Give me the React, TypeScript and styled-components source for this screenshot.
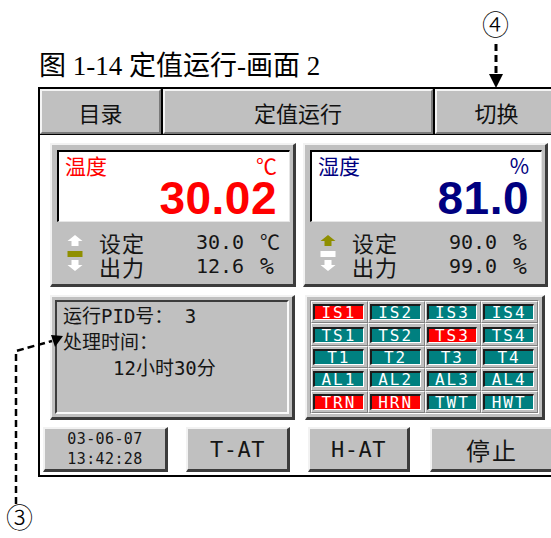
import React from "react";
import styled, { createGlobalStyle } from "styled-components";

const GlobalStyle = createGlobalStyle`
  html, body {
    margin: 0;
    padding: 0;
    background: #fff;
    overflow: hidden;
  }
`;

const MONO = `"DejaVu Sans Mono", "Noto Sans CJK SC", monospace`;
const CJK = `"Noto Sans CJK SC", "DejaVu Sans", sans-serif`;

const Page = styled.div`
  position: relative;
  width: 551px;
  height: 538px;
  overflow: hidden;
  padding-top: 51px;
  box-sizing: border-box;
`;

const Caption = styled.div`
  margin-left: 39px;
  height: 36px;
  font-family: "Liberation Serif", "Noto Sans CJK SC", serif;
  font-size: 27px;
  line-height: 31px;
  color: #000;
  white-space: nowrap;
`;

const Screen = styled.div`
  margin-left: 38px;
  width: 522px;
  height: 390px;
  box-sizing: border-box;
  border: 2px solid #000;
  background: #fff;
  display: flex;
  flex-direction: column;
`;

const Header = styled.div`
  height: 46px;
  display: flex;
  gap: 2px;
  background: #000;
  border-bottom: 1px solid #000;
  box-sizing: border-box;
`;

const HeadButton = styled.div<{ $w?: number }>`
  ${({ $w }) => ($w ? `width: ${$w}px;` : "flex: 1;")}
  box-sizing: border-box;
  background: #c0c0c0;
  border-top: 2px solid #f4f4f4;
  border-left: 2px solid #f4f4f4;
  border-right: 2px solid #7a7a7a;
  border-bottom: 2px solid #7a7a7a;
  display: flex;
  align-items: center;
  justify-content: center;
  font-family: ${CJK};
  font-size: 22px;
  color: #111;
`;

const Body = styled.div`
  flex: 1;
  padding: 8px 0 0 3px;
  display: flex;
  flex-direction: column;
`;

const Row = styled.div<{ $h: number; $gap: number; $mt?: number }>`
  display: flex;
  height: ${({ $h }) => $h}px;
  gap: ${({ $gap }) => $gap}px;
  margin-left: 7px;
  margin-top: ${({ $mt }) => $mt ?? 0}px;
`;

const Raised = styled.div<{ $w: number }>`
  width: ${({ $w }) => $w}px;
  box-sizing: border-box;
  background: #c0c0c0;
  border-top: 2px solid #f2f2f2;
  border-left: 2px solid #f2f2f2;
  border-right: 3px solid #3c3c3c;
  border-bottom: 3px solid #3c3c3c;
`;

const Card = styled(Raised)`
  padding: 5px 3px 0 5px;
  display: flex;
  flex-direction: column;
`;

const Display = styled.div<{ $color: string }>`
  height: 72px;
  box-sizing: border-box;
  background: #fff;
  border-top: 2px solid #000;
  border-left: 2px solid #000;
  border-right: 1px solid #e6e6e6;
  border-bottom: 1px solid #e6e6e6;
  padding: 1px 12px 0 6px;
  color: ${({ $color }) => $color};
  display: flex;
  flex-direction: column;
`;

const DisplayTop = styled.div`
  display: flex;
  justify-content: space-between;
  height: 26px;
  font-family: ${CJK};
  font-size: 21px;
  line-height: 24px;
`;

const BigValue = styled.div`
  text-align: right;
  margin-top: -3px;
  font-family: "Liberation Sans", Arial, sans-serif;
  font-weight: 700;
  font-size: 46px;
  line-height: 44px;
  letter-spacing: 0.5px;
`;

const SetArea = styled.div`
  flex: 1;
  display: flex;
  align-items: flex-start;
  padding: 8px 0 0 10px;
`;

const IconSlot = styled.div`
  width: 16px;
  margin-top: 5px;
  margin-right: 16px;
  display: flex;
`;

const Lines = styled.div`
  display: flex;
  flex-direction: column;
`;

const Line = styled.div`
  display: flex;
  align-items: center;
  height: 24px;
  color: #151515;
`;

const LineLabel = styled.span`
  width: 97px;
  font-family: ${CJK};
  font-size: 22px;
  line-height: 24px;
  letter-spacing: 1px;
`;

const LineValue = styled.span`
  width: 64px;
  font-family: ${MONO};
  font-size: 20px;
  line-height: 24px;
`;

const LineUnit = styled.span<{ $cjk?: boolean }>`
  font-family: ${({ $cjk }) => ($cjk ? CJK : MONO)};
  font-size: ${({ $cjk }) => ($cjk ? 20 : 23)}px;
  line-height: 24px;
`;

const PidBox = styled(Raised)`
  padding: 3px;
  display: flex;
`;

const Sunken = styled.div`
  flex: 1;
  border-top: 2px solid #3c3c3c;
  border-left: 2px solid #3c3c3c;
  border-right: 2px solid #fafafa;
  border-bottom: 2px solid #fafafa;
  padding: 1px 0 0 6px;
  font-family: ${MONO};
  font-size: 19px;
  line-height: 26px;
  color: #151515;
`;

const PidLine = styled.div<{ $indent?: number }>`
  padding-left: ${({ $indent }) => $indent ?? 0}px;
  white-space: nowrap;
`;

const GridBox = styled(Raised)`
  padding: 3px;
  display: flex;
`;

const Table = styled.div`
  flex: 1;
  display: grid;
  grid-template-columns: repeat(4, 1fr);
  grid-template-rows: repeat(5, 1fr);
  border-top: 1px solid #808080;
  border-left: 1px solid #808080;
  border-right: 1px solid #fff;
  border-bottom: 1px solid #fff;
`;

const Cell = styled.div`
  border-top: 1px solid #fafafa;
  border-left: 1px solid #fafafa;
  border-right: 1px solid #808080;
  border-bottom: 1px solid #808080;
  padding: 0 3px 0 1px;
  display: flex;
  align-items: center;
`;

const Flag = styled.div<{ $on: boolean }>`
  flex: 1;
  height: 16px;
  box-sizing: border-box;
  background: ${({ $on }) => ($on ? "#ff0000" : "#008080")};
  border-top: 2px solid #1c1c1c;
  border-left: 2px solid #1c1c1c;
  border-right: 1px solid #fff;
  border-bottom: 1px solid #fff;
  color: #fff;
  font-family: ${MONO};
  font-size: 16px;
  line-height: 13px;
  letter-spacing: 2px;
  text-align: center;
`;

const FootButton = styled(Raised)`
  display: flex;
  flex-direction: column;
  align-items: center;
  justify-content: center;
  color: #151515;
`;

const Footer = styled.div`
  display: flex;
  height: 45px;
  margin-top: 7px;
  gap: 18px;
`;

const Clock = styled.div`
  font-family: ${MONO};
  font-size: 15px;
  line-height: 20px;
  letter-spacing: 0.4px;
`;

const KeyText = styled.div<{ $cjk?: boolean }>`
  font-family: ${({ $cjk }) => ($cjk ? CJK : MONO)};
  font-size: ${({ $cjk }) => ($cjk ? 24 : 22)}px;
  letter-spacing: ${({ $cjk }) => ($cjk ? 2 : 0.5)}px;
`;

const Overlay = styled.svg`
  position: absolute;
  left: 0;
  top: 0;
  pointer-events: none;
`;

const Marker = styled.span<{ $x: number; $y: number }>`
  position: absolute;
  left: ${({ $x }) => $x}px;
  top: ${({ $y }) => $y}px;
  font-family: "Noto Sans CJK SC", "DejaVu Sans", sans-serif;
  font-weight: 300;
  font-size: 27px;
  line-height: 27px;
  color: #000;
`;

const Indicator: React.FC<{ up: string; mid: string }> = ({ up, mid }) => (
  <svg width="16" height="36" viewBox="0 0 16 36">
    <path d="M8 0 L15.5 6 H11.5 V11 H4.5 V6 H0.5 Z" fill={up} />
    <rect x="0.5" y="16" width="15" height="6" fill={mid} />
    <path d="M4.5 25 H11.5 V30 H15.5 L8 36 L0.5 30 H4.5 Z" fill="#fff" />
  </svg>
);

type Reading = {
  name: string;
  unit: string;
  value: string;
  color: string;
  up: string;
  mid: string;
  set: string;
  out: string;
  setUnit: string;
  width: number;
};

const readings: Reading[] = [
  { name: "温度", unit: "℃", value: "30.02", color: "#ff0000", up: "#fff", mid: "#8f8f00", set: "30.0", out: "12.6", setUnit: "℃", width: 246 },
  { name: "湿度", unit: "%", value: "81.0", color: "#000080", up: "#8f8f00", mid: "#fff", set: "90.0", out: "99.0", setUnit: "%", width: 245 },
];

const flags: [string, boolean][] = [
  ["IS1", true], ["IS2", false], ["IS3", false], ["IS4", false],
  ["TS1", false], ["TS2", false], ["TS3", true], ["TS4", false],
  ["T1", false], ["T2", false], ["T3", false], ["T4", false],
  ["AL1", false], ["AL2", false], ["AL3", false], ["AL4", false],
  ["TRN", true], ["HRN", true], ["TWT", false], ["HWT", false],
];

const App: React.FC = () => (
  <>
    <GlobalStyle />
    <Page>
      <Caption>图 1-14 定值运行-画面 2</Caption>
      <Screen>
        <Header>
          <HeadButton $w={121}>目录</HeadButton>
          <HeadButton $w={270}>定值运行</HeadButton>
          <HeadButton>切换</HeadButton>
        </Header>
        <Body>
          <Row $h={144} $gap={7}>
            {readings.map((r) => (
              <Card key={r.name} $w={r.width}>
                <Display $color={r.color}>
                  <DisplayTop>
                    <span>{r.name}</span>
                    <span>{r.unit}</span>
                  </DisplayTop>
                  <BigValue>{r.value}</BigValue>
                </Display>
                <SetArea>
                  <IconSlot>
                    <Indicator up={r.up} mid={r.mid} />
                  </IconSlot>
                  <Lines>
                    <Line>
                      <LineLabel>设定</LineLabel>
                      <LineValue>{r.set}</LineValue>
                      <LineUnit $cjk={r.setUnit === "℃"}>{r.setUnit}</LineUnit>
                    </Line>
                    <Line>
                      <LineLabel>出力</LineLabel>
                      <LineValue>{r.out}</LineValue>
                      <LineUnit>%</LineUnit>
                    </Line>
                  </Lines>
                </SetArea>
              </Card>
            ))}
          </Row>
          <Row $h={125} $gap={10} $mt={8}>
            <PidBox $w={245}>
              <Sunken>
                <PidLine>运行PID号： 3</PidLine>
                <PidLine>处理时间：</PidLine>
                <PidLine $indent={50}>12小时30分</PidLine>
              </Sunken>
            </PidBox>
            <GridBox $w={240}>
              <Table>
                {flags.map(([label, on]) => (
                  <Cell key={label}>
                    <Flag $on={on}>{label}</Flag>
                  </Cell>
                ))}
              </Table>
            </GridBox>
          </Row>
          <Footer>
            <FootButton $w={125}>
              <Clock>03-06-07</Clock>
              <Clock>13:42:28</Clock>
            </FootButton>
            <FootButton $w={104}>
              <KeyText>T-AT</KeyText>
            </FootButton>
            <FootButton $w={102}>
              <KeyText>H-AT</KeyText>
            </FootButton>
            <FootButton $w={125} style={{ marginLeft: 2 }}>
              <KeyText $cjk>停止</KeyText>
            </FootButton>
          </Footer>
        </Body>
      </Screen>

      <Overlay width="551" height="538" viewBox="0 0 551 538">
        <line x1="496" y1="44" x2="496" y2="75" stroke="#000" strokeWidth="3" strokeDasharray="7 4" />
        <polygon points="489,74 503,74 496,88" fill="#000" />
        <path d="M16 504 L16 351 L52 341" fill="none" stroke="#000" strokeWidth="2.5" strokeDasharray="7 4" />
        <polygon points="63,336 51,335 55,347" fill="#000" />
      </Overlay>
      <Marker $x={482} $y={10}>④</Marker>
      <Marker $x={6} $y={503}>③</Marker>
    </Page>
  </>
);

export default App;
